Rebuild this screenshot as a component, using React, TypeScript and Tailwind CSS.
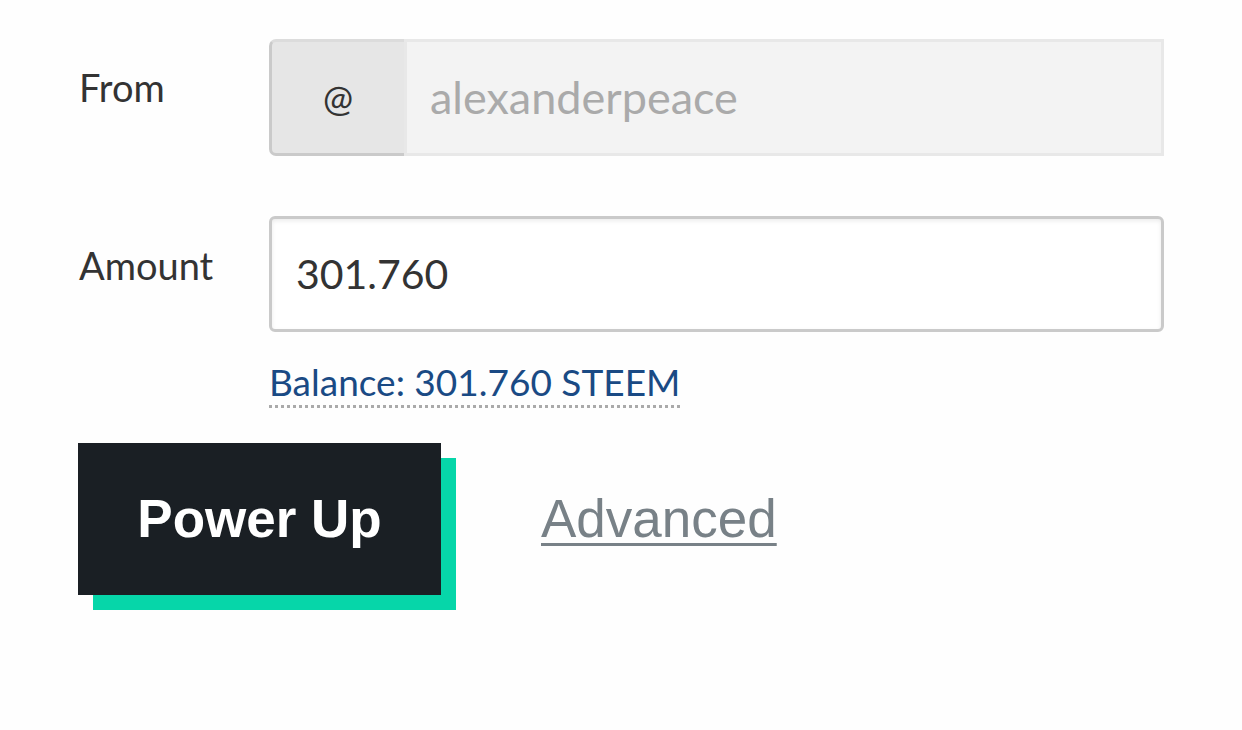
import React from "react";

const sans = { fontFamily: "Lato, 'Open Sans', sans-serif" };

export default function App() {
  return (
    <div
      className="w-[1242px] h-[730px] bg-[#fefefe] pl-[79px] pt-[39px] text-[#333]"
      style={sans}
    >
      {/* From */}
      <div className="flex">
        <label className="w-[190px] pt-[25px] text-[38px] leading-[46px] text-[#333]">From</label>
        <div className="flex h-[117px] w-[895px]">
          <div className="flex w-[135px] items-center justify-center rounded-l-[7px] border-[3px] border-r-0 border-[#cacaca] border-t-[#dcdcdc] bg-[#e6e6e6] text-[36px]">
            @
          </div>
          <div className="flex flex-1 items-center border-[3px] border-[#e8e8e8] bg-[#f3f3f3] pl-[23px] text-[45px] text-[#aaa]">
            alexanderpeace
          </div>
        </div>
      </div>

      {/* Amount */}
      <div className="mt-[60px] flex">
        <label className="w-[190px] pt-[26px] text-[38px] leading-[46px] text-[#333]">Amount</label>
        <div className="w-[895px]">
          <div className="flex h-[116px] items-center rounded-[6px] border-[3px] border-[#cacaca] bg-white pl-[24px] text-[41px] text-[#333] shadow-[inset_0_2px_4px_rgba(0,0,0,0.08)]">
            301.760
          </div>
          <div className="mt-[27px]">
            <span className="border-b-[3px] border-dotted border-[#aaa] pb-[1px] text-[37px] leading-[45px] text-[#1a4a84]">
              Balance: 301.760 STEEM
            </span>
          </div>
        </div>
      </div>

      {/* Actions */}
      <div className="mt-[39px] flex items-center" style={{ fontFamily: "'Liberation Sans', Arial, sans-serif" }}>
        <button className="-ml-[1px] flex h-[152px] w-[363px] items-center justify-center bg-[#1a1f24] text-[53px] font-bold text-white shadow-[15px_15px_0_#06d6a9]">
          Power Up
        </button>
        <a className="ml-[100px] text-[53px] text-[#788187] underline decoration-[3px] underline-offset-[6px]">
          Advanced
        </a>
      </div>
    </div>
  );
}
